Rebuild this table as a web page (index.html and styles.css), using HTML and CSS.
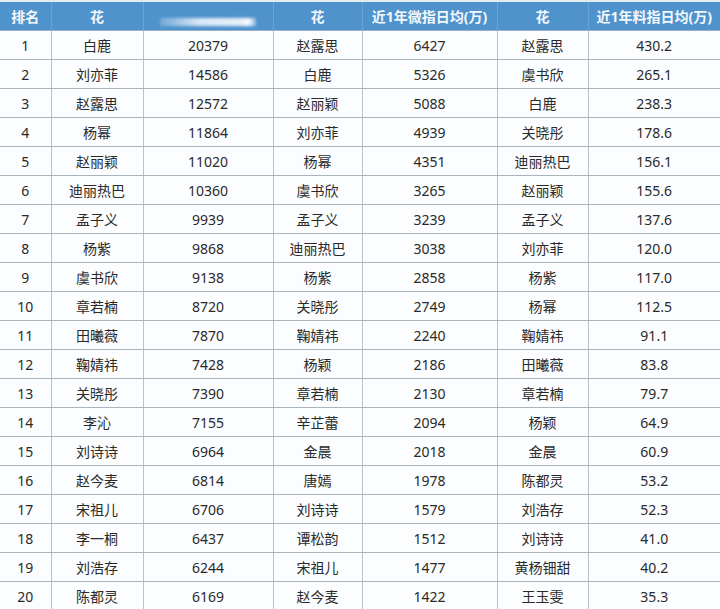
FILE: index.html
```html
<!DOCTYPE html>
<html lang="zh">
<head>
<meta charset="utf-8">
<link rel="stylesheet" href="styles.css">
</head>
<body>
<table class="rank">
<colgroup>
<col class="c1"><col class="c2"><col class="c3"><col class="c4"><col class="c5"><col class="c6"><col class="c7">
</colgroup>
<thead>
<tr><th>排名</th><th>花</th><th><span class="blur"></span></th><th>花</th><th>近1年微指日均(万)</th><th>花</th><th>近1年料指日均(万)</th></tr>
</thead>
<tbody>
<tr><td>1</td><td>白鹿</td><td>20379</td><td>赵露思</td><td>6427</td><td>赵露思</td><td>430.2</td></tr>
<tr><td>2</td><td>刘亦菲</td><td>14586</td><td>白鹿</td><td>5326</td><td>虞书欣</td><td>265.1</td></tr>
<tr><td>3</td><td>赵露思</td><td>12572</td><td>赵丽颖</td><td>5088</td><td>白鹿</td><td>238.3</td></tr>
<tr><td>4</td><td>杨幂</td><td>11864</td><td>刘亦菲</td><td>4939</td><td>关晓彤</td><td>178.6</td></tr>
<tr><td>5</td><td>赵丽颖</td><td>11020</td><td>杨幂</td><td>4351</td><td>迪丽热巴</td><td>156.1</td></tr>
<tr><td>6</td><td>迪丽热巴</td><td>10360</td><td>虞书欣</td><td>3265</td><td>赵丽颖</td><td>155.6</td></tr>
<tr><td>7</td><td>孟子义</td><td>9939</td><td>孟子义</td><td>3239</td><td>孟子义</td><td>137.6</td></tr>
<tr><td>8</td><td>杨紫</td><td>9868</td><td>迪丽热巴</td><td>3038</td><td>刘亦菲</td><td>120.0</td></tr>
<tr><td>9</td><td>虞书欣</td><td>9138</td><td>杨紫</td><td>2858</td><td>杨紫</td><td>117.0</td></tr>
<tr><td>10</td><td>章若楠</td><td>8720</td><td>关晓彤</td><td>2749</td><td>杨幂</td><td>112.5</td></tr>
<tr><td>11</td><td>田曦薇</td><td>7870</td><td>鞠婧祎</td><td>2240</td><td>鞠婧祎</td><td>91.1</td></tr>
<tr><td>12</td><td>鞠婧祎</td><td>7428</td><td>杨颖</td><td>2186</td><td>田曦薇</td><td>83.8</td></tr>
<tr><td>13</td><td>关晓彤</td><td>7390</td><td>章若楠</td><td>2130</td><td>章若楠</td><td>79.7</td></tr>
<tr><td>14</td><td>李沁</td><td>7155</td><td>辛芷蕾</td><td>2094</td><td>杨颖</td><td>64.9</td></tr>
<tr><td>15</td><td>刘诗诗</td><td>6964</td><td>金晨</td><td>2018</td><td>金晨</td><td>60.9</td></tr>
<tr><td>16</td><td>赵今麦</td><td>6814</td><td>唐嫣</td><td>1978</td><td>陈都灵</td><td>53.2</td></tr>
<tr><td>17</td><td>宋祖儿</td><td>6706</td><td>刘诗诗</td><td>1579</td><td>刘浩存</td><td>52.3</td></tr>
<tr><td>18</td><td>李一桐</td><td>6437</td><td>谭松韵</td><td>1512</td><td>刘诗诗</td><td>41.0</td></tr>
<tr><td>19</td><td>刘浩存</td><td>6244</td><td>宋祖儿</td><td>1477</td><td>黄杨钿甜</td><td>40.2</td></tr>
<tr><td>20</td><td>陈都灵</td><td>6169</td><td>赵今麦</td><td>1422</td><td>王玉雯</td><td>35.3</td></tr>
</tbody>
</table>
</body>
</html>
```
FILE: styles.css
```css
html, body {
  margin: 0;
  padding: 0;
  background: #ffffff;
}
body {
  font-family: "Noto Sans", "Noto Sans CJK SC", sans-serif;
  color: #2a2a2a;
}
.rank {
  width: 720px;
  table-layout: fixed;
  border-collapse: collapse;
  border-top: 2px solid #e3ecf3;
}
.c1 { width: 51px; }
.c2 { width: 92px; }
.c3 { width: 130px; }
.c4 { width: 89px; }
.c5 { width: 135px; }
.c6 { width: 91px; }
.c7 { width: 132px; }
.rank th {
  height: 28px;
  padding: 0;
  background: #4f93cd;
  color: #f4f8fc;
  font-size: 14px;
  font-weight: 700;
  text-align: center;
  border-left: 1px solid #6aa3d6;
  border-bottom: 1px solid #9bb0c4;
  white-space: nowrap;
}
.rank th:first-child { border-left: none; }
.rank td {
  height: 28px;
  padding: 0;
  font-size: 14px;
  text-align: center;
  border-left: 1px solid #b9c2ca;
  border-bottom: 1px solid #aab4bd;
  background: #fbfdfe;
  white-space: nowrap;
}
.rank td:first-child { border-left: none; }
.blur {
  display: inline-block;
  width: 96px;
  height: 8px;
  margin-top: 8px;
  background: linear-gradient(90deg, rgba(255,255,255,0.2), rgba(230,240,250,0.9) 40%, rgba(240,246,252,0.95) 85%, #ffffff 92%, rgba(255,255,255,0.3));
  filter: blur(1.5px);
  vertical-align: middle;
}
```
